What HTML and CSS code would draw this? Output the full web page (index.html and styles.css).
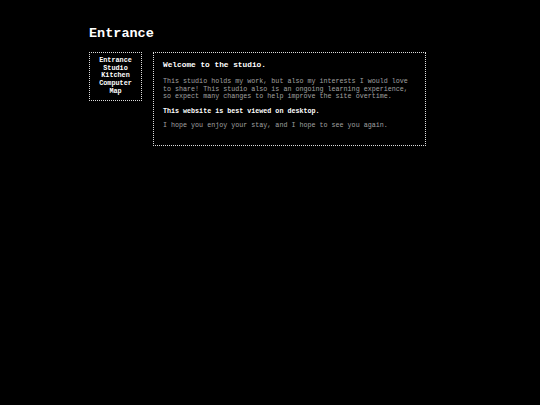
FILE: index.html
```html
<!DOCTYPE html>
<html>
<head>
<meta charset="utf-8">
<link rel="stylesheet" href="styles.css">
</head>
<body>
<div class="page">
  <h1 class="title">Entrance</h1>
  <div class="layout">
    <nav class="nav">
      <a href="#">Entrance</a>
      <a href="#">Studio</a>
      <a href="#">Kitchen</a>
      <a href="#">Computer</a>
      <a href="#">Map</a>
    </nav>
    <main class="content">
      <h2 class="heading">Welcome to the studio.</h2>
      <p class="text">This studio holds my work, but also my interests I would love to share! This studio also is an ongoing learning experience, so expect many changes to help improve the site overtime.</p>
      <p class="text strong">This website is best viewed on desktop.</p>
      <p class="text">I hope you enjoy your stay, and I hope to see you again.</p>
    </main>
  </div>
</div>
</body>
</html>
```
FILE: styles.css
```css
html, body {
  margin: 0;
  padding: 0;
  background: #000;
}
body {
  font-family: "Liberation Mono", "Courier New", monospace;
  color: #fff;
}
.page {
  padding: 26px 0 0 89px;
}
.title {
  margin: 0;
  font-size: 13.5px;
  line-height: 16px;
  font-weight: bold;
}
.layout {
  display: flex;
  align-items: flex-start;
  gap: 11px;
  margin-top: 10px;
}
.nav {
  width: 51px;
  border: 1px dotted #ddd;
  display: flex;
  flex-direction: column;
  align-items: center;
  padding: 4px 0 4px;
}
.nav a {
  color: #fff;
  text-decoration: none;
  font-weight: bold;
  font-size: 6.8px;
  line-height: 7.7px;
}
.content {
  width: 252px;
  border: 1px dotted #ddd;
  padding: 7px 10px 15px 9px;
}
.heading {
  margin: 0 0 8px;
  font-size: 7.8px;
  line-height: 10px;
  font-weight: bold;
}
.text {
  margin: 0 0 7px;
  font-size: 6.7px;
  line-height: 7.5px;
  color: #a0a0a0;
}
.text:last-child {
  margin-bottom: 0;
}
.strong {
  color: #fff;
  font-weight: bold;
}
```
